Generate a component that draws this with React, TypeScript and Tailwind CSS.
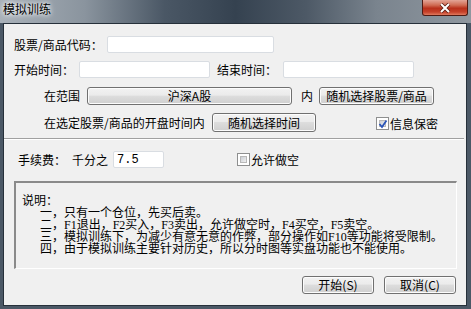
import React from 'react'

const btn =
    "flex items-center justify-center border border-[#707070] rounded-[3px] bg-[linear-gradient(to_bottom,#f2f2f2_0%,#ebebeb_45%,#dddddd_50%,#cfcfcf_100%)] shadow-[inset_0_0_0_1px_#fcfcfc] text-[12px] leading-none"

function CheckBox({ checked = false }: { checked?: boolean }) {
    return (
        <span className="relative inline-flex w-[13px] h-[13px] border border-[#8e8f8f] bg-white shrink-0">
            <span className="m-[2px] flex-1 border border-[#b8b8b8] bg-[linear-gradient(135deg,#cbcfd5_0%,#f0f0f0_100%)]" />
            {checked && (
                <svg className="absolute left-[1px] top-[1px]" width="10" height="10" viewBox="0 0 10 10">
                    <path d="M1.5 5 L4 8 L8.5 1.5" fill="none" stroke="#2a54b8" strokeWidth="1.8" />
                </svg>
            )}
        </span>
    )
}

function TitleBar() {
    return (
        <div className="h-[23px] flex items-start justify-between bg-[linear-gradient(to_right,#a9b1b9_0%,#8a949e_18%,#4a5765_35%,#354250_50%,#4d5966_65%,#7a848e_80%,#8f979f_100%)]">
            <span className="ml-[3px] mt-[2px] text-[12px] leading-[14px] text-black [text-shadow:0_0_4px_#ffffff,0_0_6px_#ffffff]">
                模拟训练
            </span>
            <div className="mr-[3px] w-[46px] h-[16px] rounded-b-[3px] border border-t-0 border-[#4f1a12] bg-[linear-gradient(to_bottom,#e3a597_0%,#cf6a52_35%,#b8301b_55%,#c6412a_80%,#e07a5e_100%)] flex items-center justify-center">
                <svg width="12" height="10" viewBox="0 0 12 10">
                    <path d="M2 1 L10 9 M10 1 L2 9" stroke="#5a1d14" strokeWidth="3.6" />
                    <path d="M2 1 L10 9 M10 1 L2 9" stroke="#ffffff" strokeWidth="2" />
                </svg>
            </div>
        </div>
    )
}

function TextBox({ width, value }: { width: string; value?: string }) {
    return (
        <div className={`${width} h-[17px] border border-[#d9dde2] rounded-[2px] bg-white flex items-center px-[3px] text-[12px] font-['Liberation_Mono',monospace]`}>
            {value}
        </div>
    )
}

export default function App() {
    const notes = [
        "一，只有一个仓位，先买后卖。",
        "二，F1退出，F2买入，F3卖出，允许做空时，F4买空，F5卖空。",
        "三，模拟训练下，为减少有意无意的作弊，部分操作如F10等功能将受限制。",
        "四，由于模拟训练主要针对历史，所以分时图等实盘功能也不能使用。",
    ]

    return (
        <div className="w-[471px] h-[309px] bg-[#4b5866] flex flex-col overflow-hidden font-['Noto_Sans_CJK_SC',sans-serif] text-[12px] text-black">
            <TitleBar />
            <div className="flex-1 ml-[3px] mr-[4px] mb-[3px] border border-[#26303a] bg-[#f0f0f0] flex flex-col">
                {/* code */}
                <div className="mt-[12px] h-[17px] flex items-center pl-[10px]">
                    <span className="w-[93px]">股票/商品代码：</span>
                    <TextBox width="w-[167px]" />
                </div>

                {/* time range */}
                <div className="mt-[8px] h-[17px] flex items-center pl-[10px]">
                    <span className="w-[65px]">开始时间：</span>
                    <TextBox width="w-[131px]" />
                    <span className="ml-[7px] w-[66px]">结束时间：</span>
                    <TextBox width="w-[131px]" />
                </div>

                {/* range */}
                <div className="mt-[9px] h-[18px] flex items-center pl-[40px]">
                    <span className="w-[43px]">在范围</span>
                    <div className={`${btn} w-[205px] h-[18px]`}>沪深A股</div>
                    <span className="ml-[9px] w-[18px]">内</span>
                    <div className={`${btn} w-[115px] h-[18px]`}>随机选择股票/商品</div>
                </div>

                <div className="mt-[8px] h-[19px] flex items-center pl-[40px]">
                    <span className="w-[168px]">在选定股票/商品的开盘时间内</span>
                    <div className={`${btn} w-[104px] h-[19px]`}>随机选择时间</div>
                    <span className="ml-[60px] mt-[2px] flex items-center gap-[1px]">
                        <CheckBox checked />
                        <span>信息保密</span>
                    </span>
                </div>

                <div className="mt-[6px] w-[460px] border-t border-t-[#a0a0a0] border-b border-b-white" />

                {/* fee */}
                <div className="mt-[11px] h-[17px] flex items-center pl-[14px]">
                    <span className="w-[54px]">手续费：</span>
                    <span className="w-[41px]">千分之</span>
                    <TextBox width="w-[51px]" value="7.5" />
                    <span className="ml-[73px] flex items-center gap-[1px]">
                        <CheckBox />
                        <span>允许做空</span>
                    </span>
                </div>

                {/* notes */}
                <div className="mt-[13px] ml-[10px] w-[443px] h-[88px] border-t-2 border-l-2 border-t-[#8a8a8a] border-l-[#8a8a8a] border-b border-r border-b-white border-r-white pt-[12px] pl-[6px] leading-[12px] font-['Liberation_Serif','Noto_Sans_CJK_SC',serif]">
                    <div>说明：</div>
                    {notes.map((n) => (
                        <div key={n} className="pl-[18px]">{n}</div>
                    ))}
                </div>

                {/* actions */}
                <div className="mt-[7px] flex justify-end gap-[10px] pr-[10px]">
                    <div className={`${btn} w-[72px] h-[18px] border-[#3c7fb1] shadow-[inset_0_0_0_1px_#a6dcf6]`}>开始(S)</div>
                    <div className={`${btn} w-[72px] h-[18px]`}>取消(C)</div>
                </div>
            </div>
        </div>
    )
}
